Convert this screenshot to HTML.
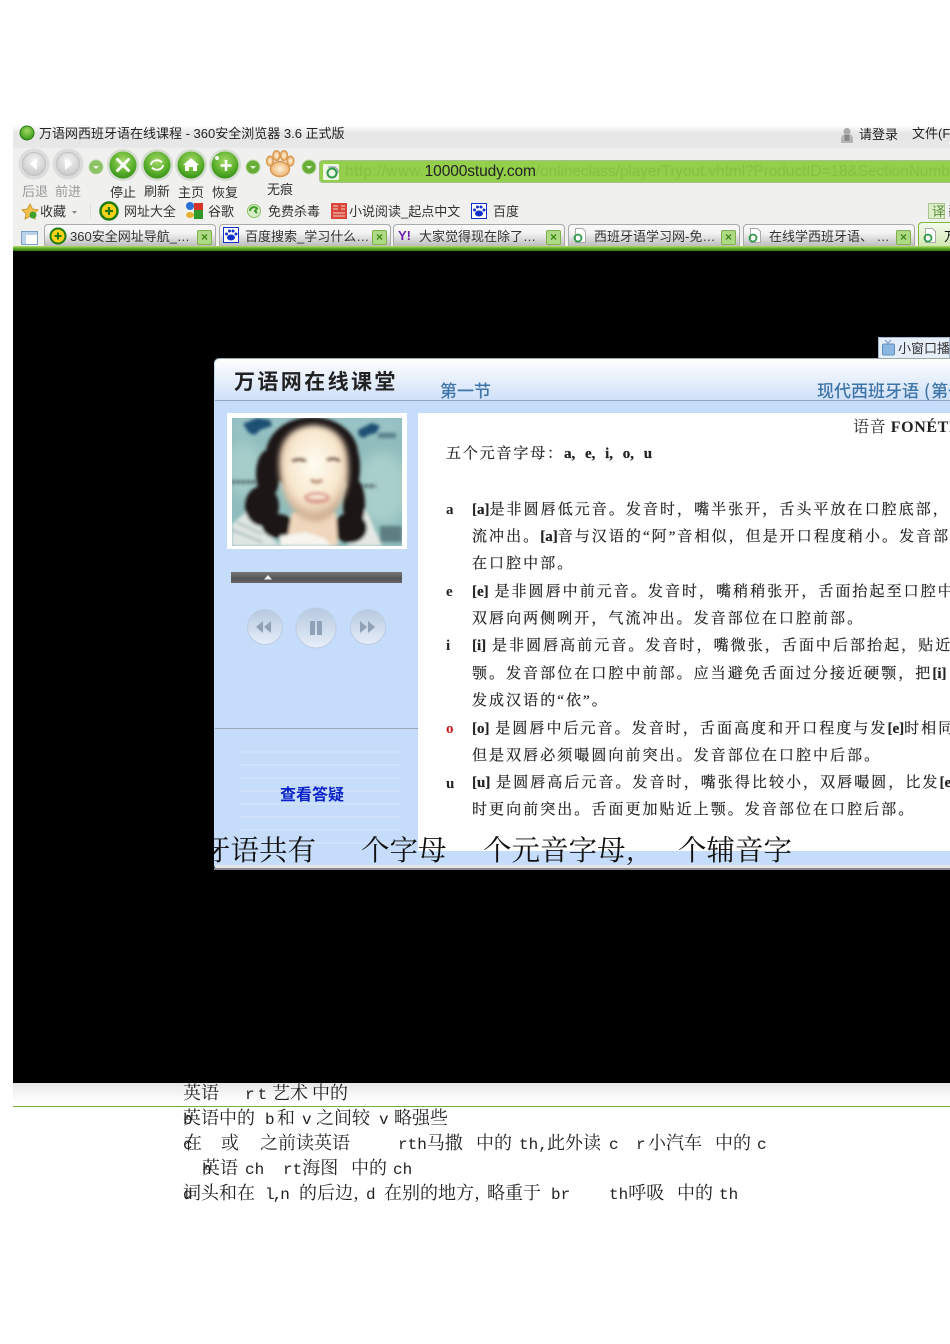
<!DOCTYPE html>
<html lang="zh"><head><meta charset="utf-8"><title>万语网</title>
<style>
html,body{margin:0;padding:0;background:#fff}
#p{position:relative;width:950px;height:1344px;overflow:hidden;background:#fff;font-family:"Liberation Sans","Noto Sans CJK SC",sans-serif;filter:blur(.35px)}
.a{position:absolute;white-space:pre;line-height:1}
.u{font-size:13px;color:#222}
.tl{font-size:13px;color:#333}
.g{color:#999}
.c{font-family:"Liberation Serif","Noto Serif CJK SC",serif;font-size:15px;color:#222;letter-spacing:2.05px;-webkit-text-stroke:.2px #222}
.c b{color:#222;letter-spacing:0}
.k{font-family:"Liberation Serif","Noto Serif CJK SC",serif;font-size:15px;font-weight:bold;color:#222}
.b{font-family:"Noto Serif CJK SC",serif;font-size:18px;color:#222}
.b i{font:16px "Liberation Mono",monospace;word-spacing:-4px}
.big{font-family:"Noto Serif CJK SC",serif;font-size:28.5px;color:#111}
.tab{position:absolute;top:224px;height:22px;width:172px;border:1px solid #aaa;border-bottom:0;border-radius:4px 4px 0 0;background:linear-gradient(#fafafa,#f2f2f2 40%,#bdbdbd);box-sizing:border-box}
.x{position:absolute;right:3px;top:5px;width:15px;height:15px;box-sizing:border-box;background:#aed985;border:1px solid #7fb04c;border-radius:2px;color:#3d8a16;font:bold 12px/13px "Liberation Sans",sans-serif;text-align:center}
</style></head><body><div id="p">
<!-- browser chrome -->
<div class="a" style="left:13px;top:125px;width:937px;height:23px;background:linear-gradient(#fff,#e6e6e6 35%,#e8e8e8)"></div>
<div class="a" style="left:13px;top:148px;width:937px;height:103px;background:#f0f1ee"></div>
<svg class="a" style="left:13px;top:120px" width="937" height="135" viewBox="13 120 937 135">
<defs>
<radialGradient id="gb" cx=".5" cy=".35" r=".7"><stop offset="0" stop-color="#a6d96a"/><stop offset=".6" stop-color="#5cb02c"/><stop offset="1" stop-color="#2f8a16"/></radialGradient>
<radialGradient id="sb" cx=".5" cy=".35" r=".7"><stop offset="0" stop-color="#f4f4f4"/><stop offset="1" stop-color="#c4c6c4"/></radialGradient>
<radialGradient id="pw" cx=".5" cy=".5" r=".6"><stop offset="0" stop-color="#fff2d8"/><stop offset="1" stop-color="#e8a85c"/></radialGradient>
</defs>
<circle cx="27" cy="133" r="7" fill="url(#gb)" stroke="#2a7d15"/>
<circle cx="34" cy="164" r="15.5" fill="#dcdcdc"/><circle cx="34" cy="164" r="11.5" fill="url(#sb)" stroke="#c0c0c0"/><path d="M37 158l-7 6 7 6z" fill="#fff"/>
<circle cx="68" cy="164" r="15.5" fill="#dcdcdc"/><circle cx="68" cy="164" r="11.5" fill="url(#sb)" stroke="#c0c0c0"/><path d="M65 158l7 6-7 6z" fill="#fff"/>
<circle cx="96" cy="167" r="7" fill="#8cc265" stroke="#b9d9a2"/><path d="M93 166h6l-3 3z" fill="#e8f5dc"/>
<circle cx="123" cy="165" r="16" fill="#d4dcd0"/><circle cx="123" cy="165" r="13.5" fill="url(#gb)"/><path d="M117.500 159.500l11 11m0-11l-11 11" stroke="#fff" stroke-width="3" stroke-linecap="round"/>
<circle cx="157" cy="165" r="16" fill="#d4dcd0"/><circle cx="157" cy="165" r="13.5" fill="url(#gb)"/><path d="M151 165a6 5 0 0 1 11-2.500M163 165a6 5 0 0 1-11 2.500" fill="none" stroke="#fff" stroke-width="2"/>
<circle cx="191" cy="165" r="16" fill="#d4dcd0"/><circle cx="191" cy="165" r="13.5" fill="url(#gb)"/><path d="M183 165l8-7 8 7h-2v6h-4v-4h-4v4h-4v-6z" fill="#fff"/>
<circle cx="225" cy="165" r="16" fill="#d4dcd0"/><circle cx="225" cy="165" r="13.5" fill="url(#gb)"/><path d="M226 160v11m-5.500-5.500h11" stroke="#fff" stroke-width="2.500"/><circle cx="217" cy="158" r="2" fill="#fff"/>
<circle cx="253" cy="167" r="7" fill="#67ad37" stroke="#b9d9a2"/><path d="M250 166h6l-3 3z" fill="#e8f5dc"/>
<g fill="url(#pw)" stroke="#d99a55" stroke-width="1.500"><ellipse cx="280" cy="169" rx="9.500" ry="7.500"/><ellipse cx="270" cy="161" rx="3.300" ry="4.800"/><ellipse cx="276.500" cy="155.500" rx="3.500" ry="4.800"/><ellipse cx="284" cy="155.500" rx="3.500" ry="4.800"/><ellipse cx="290.500" cy="161" rx="3.300" ry="4.800"/></g>
<circle cx="309" cy="167" r="7" fill="#67ad37" stroke="#b9d9a2"/><path d="M306 166h6l-3 3z" fill="#e8f5dc"/>
<rect x="319.500" y="160.500" width="640" height="22" rx="3" fill="#93cf4b" stroke="#a6c08c"/>
<rect x="323" y="164" width="16" height="16" rx="1" fill="#edf5e4"/><circle cx="332" cy="173" r="4.500" fill="none" stroke="#2f9a4a" stroke-width="2"/><path d="M328 167h7l3 3v3" fill="none" stroke="#8899aa"/>
<path d="M30 204l2.500 5 5.500 .8-4 3.900 1 5.300-5-2.600-5 2.600 1-5.300-4-3.900 5.500-.8z" fill="#f2c050" stroke="#d09a30"/><circle cx="33" cy="215" r="3.500" fill="#3fa02a"/>
<path d="M72 211h5l-2.500 3z" fill="#888"/><path d="M90.500 203v15" stroke="#ddd"/>
<circle cx="109" cy="211" r="8.500" fill="#ffd21a" stroke="#1f7a10" stroke-width="2.500"/><path d="M109 207v8m-4-4h8" stroke="#1f7a10" stroke-width="2.200"/>
<circle cx="190" cy="206" r="4" fill="#2a6fd6"/><rect x="194" y="203" width="9" height="7" fill="#d8342a"/><rect x="194" y="210" width="9" height="9" fill="#2f9a2a"/><ellipse cx="190" cy="215" rx="4" ry="3" fill="#e8b030"/>
<circle cx="254" cy="211" r="6.500" fill="#d8ecc8" stroke="#8cc265"/><path d="M250 211a4 4 0 0 1 7-2.500l-2 2.500 2 2" fill="none" stroke="#3f9a2a" stroke-width="2"/>
<rect x="331" y="203" width="16" height="16" fill="#d9453a"/><path d="M333 206h5M341 206h4M333 209h5M341 209h4M333 213h12M333 216h12" stroke="#f3d8c8"/>
<rect x="471.500" y="203.500" width="15" height="15" fill="#fff" stroke="#1330c8"/><g fill="#1330c8"><ellipse cx="479" cy="213.500" rx="4" ry="3"/><circle cx="474.500" cy="210" r="1.500"/><circle cx="477.500" cy="207" r="1.500"/><circle cx="481" cy="207" r="1.500"/><circle cx="484" cy="210" r="1.500"/></g>
<rect x="928.500" y="203.500" width="16" height="15" fill="#dcefc8" stroke="#a8c490"/>
<rect x="21.500" y="231.500" width="16" height="13" fill="#fff" stroke="#7e9fc4"/><rect x="22" y="232" width="15" height="3" fill="#bcd2ea"/><rect x="22" y="235" width="4" height="9" fill="#bcd2ea"/>
</svg>
<div class="a u" style="left:39px;top:127px">万语网西班牙语在线课程 - 360安全浏览器 3.6 正式版</div>
<svg class="a" style="left:838px;top:125px" width="18" height="20"><circle cx="9" cy="6.500" r="3.500" fill="#aaa"/><path d="M3 18v-4q0-5 6-5t6 5v4z" fill="#b5b5b5"/><rect x="6.500" y="10" width="5" height="6" fill="#888"/></svg>
<div class="a u" style="left:859px;top:128px">请登录</div>
<div class="a u" style="left:912px;top:127px">文件(F</div>
<div class="a" style="left:345px;top:164px;font-size:15.5px;letter-spacing:-.1px;color:#84c242;width:605px;overflow:hidden"><span style="letter-spacing:.35px">http://www.</span><span style="color:#222">10000study.com</span>/onlineclass/playerTryout.vhtml?ProductID=18&amp;SectionNumber</div>
<div class="a tl g" style="left:22px;top:185px">后退</div><div class="a tl g" style="left:55px;top:185px">前进</div>
<div class="a tl" style="left:110px;top:186px">停止</div><div class="a tl" style="left:144px;top:185px">刷新</div><div class="a tl" style="left:178px;top:186px">主页</div><div class="a tl" style="left:212px;top:186px">恢复</div><div class="a tl" style="left:267px;top:183px">无痕</div>
<div class="a tl" style="left:40px;top:205px">收藏</div><div class="a tl" style="left:124px;top:205px">网址大全</div><div class="a tl" style="left:208px;top:205px">谷歌</div><div class="a tl" style="left:268px;top:205px">免费杀毒</div><div class="a tl" style="left:349px;top:205px">小说阅读_起点中文</div><div class="a tl" style="left:493px;top:205px">百度</div><div class="a tl" style="left:932px;top:205px;color:#5a8a3a">译 <span style="color:#222">翻</span></div>
<!-- tabs -->
<div class="tab" style="left:44px"><svg class="a" style="left:3px;top:2px" width="20" height="18"><circle cx="10" cy="9" r="7.500" fill="#ffd21a" stroke="#1f7a10" stroke-width="2"/><path d="M10 5.500v7m-3.500-3.500h7" stroke="#1f7a10" stroke-width="2"/></svg><span class="a tl" style="left:25px;top:5px">360安全网址导航_…</span><span class="x">×</span></div>
<div class="tab" style="left:219px"><svg class="a" style="left:3px;top:2px" width="18" height="18"><rect x=".5" y=".5" width="15" height="15" fill="#fff" stroke="#1330c8"/><g fill="#1330c8"><ellipse cx="8" cy="10.500" rx="4" ry="3"/><circle cx="3.500" cy="7" r="1.500"/><circle cx="6.500" cy="4" r="1.500"/><circle cx="10" cy="4" r="1.500"/><circle cx="13" cy="7" r="1.500"/></g></svg><span class="a tl" style="left:25px;top:5px">百度搜索_学习什么…</span><span class="x">×</span></div>
<div class="tab" style="left:393px"><span class="a" style="left:4px;top:3px;font:bold 13px 'Liberation Sans';color:#6b1fa8">Y!</span><span class="a tl" style="left:25px;top:5px">大家觉得现在除了…</span><span class="x">×</span></div>
<div class="tab" style="left:568px"><svg class="a" style="left:3px;top:2px" width="18" height="18"><path d="M3.500 1.500h7l3 3v11h-10z" fill="#fff" stroke="#aaa"/><circle cx="6" cy="11" r="3.500" fill="none" stroke="#2f9a4a" stroke-width="1.800"/></svg><span class="a tl" style="left:25px;top:5px">西班牙语学习网-免…</span><span class="x">×</span></div>
<div class="tab" style="left:743px"><svg class="a" style="left:3px;top:2px" width="18" height="18"><path d="M3.500 1.500h7l3 3v11h-10z" fill="#fff" stroke="#aaa"/><circle cx="6" cy="11" r="3.500" fill="none" stroke="#2f9a4a" stroke-width="1.800"/></svg><span class="a tl" style="left:25px;top:5px">在线学西班牙语、 …</span><span class="x">×</span></div>
<div class="tab" style="left:918px;top:222px;height:26px;border:1px solid #7cb63a;background:linear-gradient(#f4faec,#cfe8b0)"><svg class="a" style="left:3px;top:4px" width="18" height="18"><path d="M3.500 1.500h7l3 3v11h-10z" fill="#fff" stroke="#aaa"/><circle cx="6" cy="11" r="3.500" fill="none" stroke="#2f9a4a" stroke-width="1.800"/></svg><span class="a tl" style="left:25px;top:7px;color:#111">万</span></div>
<div class="a" style="left:13px;top:246px;width:937px;height:5px;background:linear-gradient(#b5dd6a,#4f9e1e 60%,#2f7a10)"></div>
<!-- black -->
<div class="a" style="left:13px;top:251px;width:937px;height:832px;background:#000"></div>
<!-- small window btn -->
<div class="a" style="left:878px;top:337px;width:72px;height:22px;background:#e6eef8;border:1px solid #9fb6d3;box-sizing:border-box"></div>
<svg class="a" style="left:881px;top:339px" width="15" height="18"><path d="M4 1l3 3 3-3" fill="none" stroke="#6b9bd0"/><rect x="1.500" y="5" width="12" height="11" rx="1.500" fill="#8db8e2" stroke="#5f8fc4"/></svg>
<div class="a tl" style="left:898px;top:342px">小窗口播放</div>
<!-- panel -->
<div class="a" style="left:214px;top:358px;width:736px;height:512px;background:#c6dcfb;border-radius:5px 0 0 5px;border-top:1px solid #9aa;box-sizing:border-box"></div>
<div class="a" style="left:215px;top:359px;width:735px;height:41px;background:linear-gradient(#fff,#eef4fd 35%,#cfe0f8);border-bottom:1px solid #8fa5c0;border-radius:5px 0 0 0"></div>
<div class="a" style="left:234px;top:371px;font-family:'Noto Sans CJK SC',sans-serif;font-size:21px;font-weight:bold;color:#222;letter-spacing:2.400px">万语网在线课堂</div>
<div class="a" style="left:440px;top:381px;font-family:'Noto Sans CJK SC',sans-serif;font-size:17px;line-height:17px;font-weight:500;color:#3f74a8">第一节</div>
<div class="a" style="left:817px;top:381px;font-family:'Noto Sans CJK SC',sans-serif;font-size:17px;font-weight:500;color:#3f74a8">现代西班牙语<span style="margin-left:5px">(</span><span style="margin-left:1px">第一册)</span></div>
<!-- video -->
<div class="a" style="left:227px;top:413px;width:180px;height:136px;background:#fff"></div>
<svg class="a" style="left:232px;top:418px" width="170" height="128" viewBox="0 0 170 128"><defs><filter id="bl" x="-10%" y="-10%" width="120%" height="120%"><feGaussianBlur stdDeviation="1.500"/></filter><filter id="fc" x="-20%" y="-20%" width="140%" height="140%"><feGaussianBlur stdDeviation="3"/></filter><filter id="bg2" x="-20%" y="-20%" width="140%" height="140%"><feGaussianBlur stdDeviation="6"/></filter><clipPath id="cp"><rect width="170" height="128"/></clipPath><radialGradient id="sk" cx=".5" cy=".42" r=".6"><stop offset="0" stop-color="#fffdf2"/><stop offset=".65" stop-color="#f7e6cc"/><stop offset="1" stop-color="#c29a7c"/></radialGradient></defs>
<g clip-path="url(#cp)"><rect width="170" height="128" fill="#8fbcbc"/>
<g filter="url(#bg2)"><ellipse cx="150" cy="70" rx="26" ry="36" fill="#a9cfcb"/><ellipse cx="12" cy="50" rx="18" ry="28" fill="#a5cdca"/><rect y="0" width="170" height="14" fill="#9cc5c8"/></g>
<g filter="url(#bl)">
<path d="M11 6l14-6 13 2 2 6-12 4-5 5-6-2z" fill="#1f4f72"/>
<path d="M126 12l14-7 8 3-4 7-8 2-4 3-5-2z" fill="#1f4f72"/><path d="M146 15h18v5h-18z" fill="#58808c"/>
<path d="M0 64h24M128 68h16" stroke="#445a5a" stroke-width="4" stroke-dasharray="3 2"/>
<path d="M0 106l14-12 20 20 14 14H0z" fill="#dfe6e2"/><path d="M0 112l30 12M4 104l26 12" stroke="#8aa" stroke-width="1.500"/>
<path d="M124 92l10 0 16 36h-34z" fill="#e4e9e4"/><path d="M148 108h22v16h-22z" fill="#5d7f82"/>
<g fill="#1d1716"><ellipse cx="80" cy="36" rx="46" ry="37"/><ellipse cx="36" cy="56" rx="12" ry="24"/><ellipse cx="30" cy="88" rx="17" ry="20"/><ellipse cx="46" cy="108" rx="16" ry="12"/><ellipse cx="120" cy="50" rx="8" ry="24"/><ellipse cx="122" cy="86" rx="11" ry="26"/><ellipse cx="118" cy="110" rx="17" ry="15"/></g>
<path d="M60 94h44l2 34H54z" fill="#efd6bc"/><path d="M48 118l26-4 18 6 8 8H48z" fill="#f7f4ee"/>
</g>
<path d="M47 40q3-31 35-33 30 2 34 32 3 28-6 44-11 20-27 20-18-2-28-20-9-18-8-43z" fill="url(#sk)" filter="url(#fc)"/>
<g filter="url(#bl)"><path d="M60 43q7-3 14 0M95 42q7-3 13 1" stroke="#6a5040" stroke-width="2.500" fill="none"/><path d="M79 62q6 4 11 0" stroke="#b4856a" stroke-width="3" fill="none"/><ellipse cx="85" cy="80" rx="13" ry="6" fill="#dba090"/><ellipse cx="85" cy="79" rx="9" ry="1.800" fill="#fff3e4"/></g></g></svg>
<!-- slider -->
<div class="a" style="left:231px;top:572px;width:171px;height:11px;background:linear-gradient(#777,#555 60%,#666)"></div>
<svg class="a" style="left:264px;top:574px" width="9" height="6"><path d="M0 5.500L4 1l4 4.500z" fill="#eee"/></svg>
<!-- player -->
<svg class="a" style="left:240px;top:600px" width="150" height="56"><defs><linearGradient id="pb" x1="0" y1="0" x2="0" y2="1"><stop offset="0" stop-color="#b6c9e0"/><stop offset="1" stop-color="#e6eef9"/></linearGradient></defs>
<circle cx="25" cy="27" r="17.500" fill="url(#pb)" stroke="#bdcde2"/><path d="M23 21l-7 6 7 6zM31 21l-7 6 7 6z" fill="#8fa2b8"/>
<circle cx="76" cy="28" r="20" fill="url(#pb)" stroke="#bdcde2"/><path d="M70 21h5v14h-5zM77 21h5v14h-5z" fill="#8fa2b8"/>
<circle cx="128" cy="27" r="17.500" fill="url(#pb)" stroke="#bdcde2"/><path d="M120 21l7 6-7 6zM128 21l7 6-7 6z" fill="#8fa2b8"/></svg>
<div class="a" style="left:215px;top:728px;width:203px;height:1px;background:#96a5b8"></div>
<div class="a" style="left:240px;top:740px;width:160px;height:110px;background:repeating-linear-gradient(#c6dcfb 0 11px,#d0e2fb 11px 13px)"></div>
<div class="a" style="left:280px;top:785px;font-family:'Noto Sans CJK SC',sans-serif;font-size:16px;font-weight:bold;color:#0a22c8">查看答疑</div>
<!-- content -->
<div class="a" style="left:418px;top:413px;width:532px;height:438px;background:#fff"></div>
<div class="a k" style="left:853px;top:420px;font-size:16px;letter-spacing:.6px"><span style="font-weight:400">语音</span> FONÉTICA</div>
<div class="a c" style="left:446px;top:447px;letter-spacing:1.85px">五个元音字母：<b style="word-spacing:6px">a, e, i, o, u</b></div>
<div class="a k" style="left:446px;top:503px">a</div>
<div class="a c" style="left:472px;top:503px"><b>[a]</b>是非圆唇低元音。发音时，嘴半张开，舌头平放在口腔底部，</div>
<div class="a c" style="left:472px;top:530px">流冲出。<b>[a]</b>音与汉语的“阿”音相似，但是开口程度稍小。发音部位</div>
<div class="a c" style="left:472px;top:557px">在口腔中部。</div>
<div class="a k" style="left:446px;top:585px">e</div>
<div class="a c" style="left:472px;top:585px"><b>[e]</b> 是非圆唇中前元音。发音时，嘴稍稍张开，舌面抬起至口腔中</div>
<div class="a c" style="left:472px;top:612px">双唇向两侧咧开，气流冲出。发音部位在口腔前部。</div>
<div class="a k" style="left:446px;top:639px">i</div>
<div class="a c" style="left:472px;top:639px"><b>[i]</b> 是非圆唇高前元音。发音时，嘴微张，舌面中后部抬起，贴近</div>
<div class="a c" style="left:472px;top:667px">颚。发音部位在口腔中前部。应当避免舌面过分接近硬颚，把<b>[i]</b></div>
<div class="a c" style="left:472px;top:694px">发成汉语的“依”。</div>
<div class="a k" style="left:446px;top:722px;color:#c81818">o</div>
<div class="a c" style="left:472px;top:722px"><b>[o]</b> 是圆唇中后元音。发音时，舌面高度和开口程度与发<b>[e]</b>时相同</div>
<div class="a c" style="left:472px;top:749px">但是双唇必须嘬圆向前突出。发音部位在口腔中后部。</div>
<div class="a k" style="left:446px;top:777px">u</div>
<div class="a c" style="left:472px;top:776px"><b>[u]</b> 是圆唇高后元音。发音时，嘴张得比较小，双唇嘬圆，比发<b>[e</b></div>
<div class="a c" style="left:472px;top:803px">时更向前突出。舌面更加贴近上颚。发音部位在口腔后部。</div>
<div class="a" style="left:216px;top:865px;width:734px;height:3px;background:#e4e6ea"></div>
<div class="a" style="left:214px;top:868px;width:736px;height:2px;background:#888"></div>
<!-- overlay line -->
<div class="a big" style="left:214px;top:835px;width:736px;overflow:hidden"><span style="margin-left:-12px">牙语共有</span></div>
<div class="a big" style="left:361px;top:835px">个字母</div>
<div class="a big" style="left:483px;top:835px">个元音字母,</div>
<div class="a big" style="left:678px;top:835px">个辅音字</div>
<!-- bottom -->
<div class="a" style="left:13px;top:1083px;width:937px;height:23px;background:linear-gradient(#e6e6e6,#fafafa 60%,#fff)"></div>
<div class="a" style="left:13px;top:1106px;width:937px;height:1px;background:#79ad46"></div>
<div class="a b" style="left:183px;top:1083px">英语</div><div class="a b" style="left:245px;top:1083px"><i style="letter-spacing:3px">rt</i></div><div class="a b" style="left:272px;top:1083px">艺术</div><div class="a b" style="left:312px;top:1083px">中的</div>
<div class="a b" style="left:183px;top:1108px"><i>b</i></div><div class="a b" style="left:183px;top:1108px">英语中的</div><div class="a b" style="left:265px;top:1108px"><i>b</i></div><div class="a b" style="left:277px;top:1108px">和</div><div class="a b" style="left:302px;top:1108px"><i>v</i></div><div class="a b" style="left:316px;top:1108px">之间较</div><div class="a b" style="left:379px;top:1108px"><i>v</i></div><div class="a b" style="left:394px;top:1108px">略强些</div>
<div class="a b" style="left:183px;top:1133px"><i>c</i></div><div class="a b" style="left:184px;top:1133px">在</div><div class="a b" style="left:221px;top:1133px">或</div><div class="a b" style="left:260px;top:1133px">之前读英语</div><div class="a b" style="left:398px;top:1133px"><i>rth</i>马撒</div><div class="a b" style="left:476px;top:1133px">中的</div><div class="a b" style="left:519px;top:1133px"><i>th,</i></div><div class="a b" style="left:547px;top:1133px">此外读</div><div class="a b" style="left:609px;top:1133px"><i>c</i></div><div class="a b" style="left:636px;top:1133px"><i>r</i></div><div class="a b" style="left:648px;top:1133px">小汽车</div><div class="a b" style="left:715px;top:1133px">中的</div><div class="a b" style="left:757px;top:1133px"><i>c</i></div>
<div class="a b" style="left:202px;top:1158px"><i>h</i></div><div class="a b" style="left:202px;top:1158px">英语</div><div class="a b" style="left:245px;top:1158px"><i>ch</i></div><div class="a b" style="left:283px;top:1158px"><i>rt</i>海图</div><div class="a b" style="left:351px;top:1158px">中的</div><div class="a b" style="left:393px;top:1158px"><i>ch</i></div>
<div class="a b" style="left:183px;top:1183px"><i>d</i></div><div class="a b" style="left:183px;top:1183px">词头和在</div><div class="a b" style="left:265px;top:1183px"><i style="letter-spacing:-2px">l,n</i></div><div class="a b" style="left:299px;top:1183px">的后边,</div><div class="a b" style="left:366px;top:1183px"><i>d</i></div><div class="a b" style="left:384px;top:1183px">在别的地方,</div><div class="a b" style="left:487px;top:1183px">略重于</div><div class="a b" style="left:551px;top:1183px"><i>br</i></div><div class="a b" style="left:609px;top:1183px"><i>th</i>呼吸</div><div class="a b" style="left:677px;top:1183px">中的</div><div class="a b" style="left:719px;top:1183px"><i>th</i></div>
</div></body></html>
